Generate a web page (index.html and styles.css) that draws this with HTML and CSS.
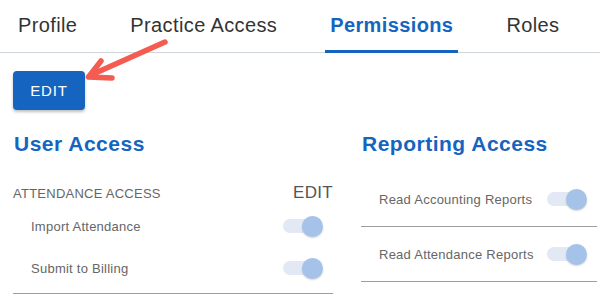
FILE: index.html
```html
<!DOCTYPE html>
<html>
<head>
<meta charset="utf-8">
<link rel="stylesheet" href="styles.css">
</head>
<body>
<div class="page">
  <nav class="tabs">
    <div class="tab">Profile</div>
    <div class="tab">Practice Access</div>
    <div class="tab active">Permissions</div>
    <div class="tab">Roles</div>
  </nav>
  <div class="toolbar">
    <button class="btn">EDIT</button>
  </div>
  <div class="columns">
    <section class="col">
      <h2 class="heading">User Access</h2>
      <div class="group-head">
        <span class="group-title">ATTENDANCE ACCESS</span>
        <span class="group-edit">EDIT</span>
      </div>
      <div class="group">
        <div class="row compact"><span class="label">Import Attendance</span><span class="switch"><span class="thumb"></span></span></div>
        <div class="row compact"><span class="label">Submit to Billing</span><span class="switch"><span class="thumb"></span></span></div>
      </div>
    </section>
    <section class="col">
      <h2 class="heading">Reporting Access</h2>
      <div class="list">
        <div class="row tall"><span class="label">Read Accounting Reports</span><span class="switch"><span class="thumb"></span></span></div>
        <div class="row tall"><span class="label">Read Attendance Reports</span><span class="switch"><span class="thumb"></span></span></div>
      </div>
    </section>
  </div>
  <svg class="arrow" width="600" height="301" viewBox="0 0 600 301">
    <g fill="none" stroke="#f45b51" stroke-width="5.5" stroke-linecap="round" stroke-linejoin="round">
      <line x1="165" y1="42" x2="91" y2="75"/>
      <polyline points="101,61 88.5,77 112,78"/>
    </g>
  </svg>
</div>
</body>
</html>
```
FILE: styles.css
```css
* { box-sizing: border-box; }
html, body { margin: 0; padding: 0; background: #fff; }
body {
  font-family: "Liberation Sans", Arial, Helvetica, sans-serif;
  width: 600px;
  height: 301px;
  overflow: hidden;
}
.page { position: relative; width: 600px; height: 301px; }

.tabs {
  display: flex;
  height: 53px;
  padding-left: 13px;
  border-bottom: 1px solid #cfd5d8;
  gap: 43px;
}
.tab {
  position: relative;
  padding: 13px 5px 0;
  font-size: 20px;
  line-height: 24px;
  letter-spacing: 0.38px;
  color: #333;
}
.tab.active {
  color: #1565c0;
  font-weight: bold;
}
.tab.active::after {
  content: "";
  position: absolute;
  left: 0;
  right: 0;
  bottom: -1px;
  height: 3px;
  background: #1565c0;
}

.toolbar { padding: 18px 0 0 13px; }
.btn {
  display: block;
  width: 72px;
  height: 39px;
  border: 0;
  border-radius: 4px;
  background: #1565c0;
  color: #fff;
  font-family: inherit;
  font-size: 15px;
  letter-spacing: 0.8px;
  box-shadow: 0 2px 3px rgba(0,0,0,0.25);
  padding: 0;
}

.columns {
  display: grid;
  grid-template-columns: 320px 236px;
  column-gap: 28px;
  padding: 22px 0 0 13px;
}
.heading {
  margin: 0;
  font-size: 21px;
  line-height: 24px;
  font-weight: bold;
  letter-spacing: 0.5px;
  color: #1565c0;
  padding-left: 1px;
}
.group-head {
  display: flex;
  justify-content: space-between;
  align-items: center;
  height: 24px;
  margin-top: 25px;
}
.group-title { font-size: 13px; color: #666; letter-spacing: 0.25px; }
.group-edit { font-size: 17px; color: #555; letter-spacing: 0.3px; }

.group { border-bottom: 1px solid #9e9e9e; padding-bottom: 4px; }
.row {
  display: flex;
  align-items: center;
  justify-content: space-between;
  padding: 0 10px 0 18px;
}
.row.compact { height: 42px; }
.list { margin-top: 16px; }
.row.tall { height: 55px; border-bottom: 1px solid #9e9e9e; }
.label { font-size: 13px; color: #666; letter-spacing: 0.25px; }

.switch {
  display: flex;
  align-items: center;
  justify-content: flex-end;
  width: 34px;
  height: 14px;
  border-radius: 7px;
  background: #e2e9f5;
  margin-right: 6px;
}
.thumb {
  flex: none;
  width: 21px;
  height: 21px;
  border-radius: 50%;
  background: #a5c2e8;
  margin-right: -6px;
  box-shadow: 0 1px 2px rgba(0,0,0,0.18);
}

.arrow { position: absolute; left: 0; top: 0; pointer-events: none; }
```
